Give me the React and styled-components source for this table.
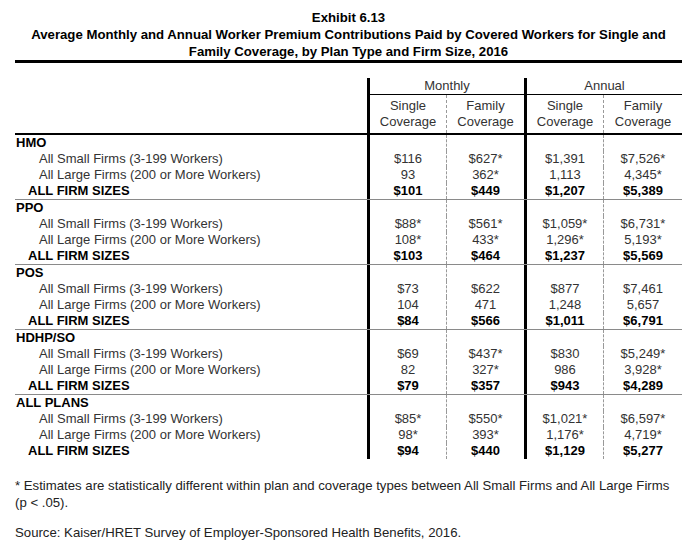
import React from 'react';
import styled, { createGlobalStyle } from 'styled-components';

const GlobalStyle = createGlobalStyle`
    body {
        margin: 0;
        background: #fff;
        font-family: "Liberation Sans", Arial, sans-serif;
        color: #000;
    }
`;

const groups = [
    {
        name: 'HMO',
        small: ['$116', '$627*', '$1,391', '$7,526*'],
        large: ['93', '362*', '1,113', '4,345*'],
        all: ['$101', '$449', '$1,207', '$5,389'],
    },
    {
        name: 'PPO',
        small: ['$88*', '$561*', '$1,059*', '$6,731*'],
        large: ['108*', '433*', '1,296*', '5,193*'],
        all: ['$103', '$464', '$1,237', '$5,569'],
    },
    {
        name: 'POS',
        small: ['$73', '$622', '$877', '$7,461'],
        large: ['104', '471', '1,248', '5,657'],
        all: ['$84', '$566', '$1,011', '$6,791'],
    },
    {
        name: 'HDHP/SO',
        small: ['$69', '$437*', '$830', '$5,249*'],
        large: ['82', '327*', '986', '3,928*'],
        all: ['$79', '$357', '$943', '$4,289'],
    },
    {
        name: 'ALL PLANS',
        small: ['$85*', '$550*', '$1,021*', '$6,597*'],
        large: ['98*', '393*', '1,176*', '4,719*'],
        all: ['$94', '$440', '$1,129', '$5,277'],
    },
];

const App = () => {
    return (
        <Page>
            <GlobalStyle />
            <Title>
                <TitleLine>Exhibit 6.13</TitleLine>
                <TitleLine>Average Monthly and Annual Worker Premium Contributions Paid by Covered Workers for Single and</TitleLine>
                <TitleLine>Family Coverage, by Plan Type and Firm Size, 2016</TitleLine>
            </Title>
            <Rule />

            <Table>
                <GroupHead>
                    <Blank />
                    <Period>Monthly</Period>
                    <Period>Annual</Period>
                </GroupHead>
                <ColHead>
                    <Blank />
                    <HeadCell $thick>Single<br />Coverage</HeadCell>
                    <HeadCell>Family<br />Coverage</HeadCell>
                    <HeadCell $thick>Single<br />Coverage</HeadCell>
                    <HeadCell>Family<br />Coverage</HeadCell>
                </ColHead>

                {groups.map((g, i) => (
                    <React.Fragment key={g.name}>
                        <Row $sep={i > 0}>
                            <Label $kind="group">{g.name}</Label>
                            <Num $thick />
                            <Num />
                            <Num $thick />
                            <Num />
                        </Row>
                        <Row>
                            <Label $kind="sub">All Small Firms (3-199 Workers)</Label>
                            {g.small.map((v, j) => <Num key={j} $thick={j % 2 === 0}>{v}</Num>)}
                        </Row>
                        <Row>
                            <Label $kind="sub">All Large Firms (200 or More Workers)</Label>
                            {g.large.map((v, j) => <Num key={j} $thick={j % 2 === 0}>{v}</Num>)}
                        </Row>
                        <Row>
                            <Label $kind="total">ALL FIRM SIZES</Label>
                            {g.all.map((v, j) => <Num key={j} $thick={j % 2 === 0} $bold>{v}</Num>)}
                        </Row>
                    </React.Fragment>
                ))}
            </Table>

            <Notes>
                <Note>* Estimates are statistically different within plan and coverage types between All Small Firms and All Large Firms</Note>
                <Note>(p &lt; .05).</Note>
                <Source>Source: Kaiser/HRET Survey of Employer-Sponsored Health Benefits, 2016.</Source>
            </Notes>
        </Page>
    );
};

export default App;

const Page = styled.div`
    width: 698px;
    height: 556px;
    box-sizing: border-box;
    padding: 9px 16px 0 15px;
    overflow: hidden;
`;
const Title = styled.div`
    display: flex;
    flex-direction: column;
    align-items: center;
    font-weight: bold;
    font-size: 13.2px;
    line-height: 17px;
`;
const TitleLine = styled.div`
    white-space: nowrap;
`;
const Rule = styled.div`
    height: 3px;
    background: #000;
`;
const Table = styled.div`
    margin-top: 15px;
    width: 667px;
    font-size: 13px;
    line-height: 16px;
`;
const cols = '352px 79px 78px 79px 79px';

const GroupHead = styled.div`
    display: grid;
    grid-template-columns: 352px 157px 158px;
`;
const Blank = styled.div``;
const Period = styled.div`
    border-left: 3px solid #000;
    border-bottom: 1px solid #000;
    text-align: center;
    color: #333;
    height: 16px;
`;
const ColHead = styled.div`
    display: grid;
    grid-template-columns: ${cols};
    border-bottom: 2px solid #000;
`;
const HeadCell = styled.div`
    border-left: ${p => (p.$thick ? '3px solid #000' : '1px dashed #999')};
    text-align: center;
    color: #333;
    padding: 3px 0 3px;
`;
const Row = styled.div`
    display: grid;
    grid-template-columns: ${cols};
    height: 16px;
    border-top: ${p => (p.$sep ? '1px solid #8a8a8a' : 'none')};
`;
const Label = styled.div`
    white-space: nowrap;
    padding-left: ${p => (p.$kind === 'sub' ? '24px' : p.$kind === 'total' ? '13px' : '1px')};
    font-weight: ${p => (p.$kind === 'sub' ? 'normal' : 'bold')};
    color: ${p => (p.$kind === 'sub' ? '#333' : '#000')};
`;
const Num = styled.div`
    border-left: ${p => (p.$thick ? '3px solid #000' : '1px dashed #999')};
    text-align: center;
    white-space: nowrap;
    font-weight: ${p => (p.$bold ? 'bold' : 'normal')};
    color: ${p => (p.$bold ? '#000' : '#333')};
`;
const Notes = styled.div`
    margin-top: 18px;
    color: #222;
    font-size: 13.2px;
    line-height: 17px;
`;
const Note = styled.div`
    white-space: nowrap;
`;
const Source = styled.div`
    margin-top: 13px;
    white-space: nowrap;
`;
